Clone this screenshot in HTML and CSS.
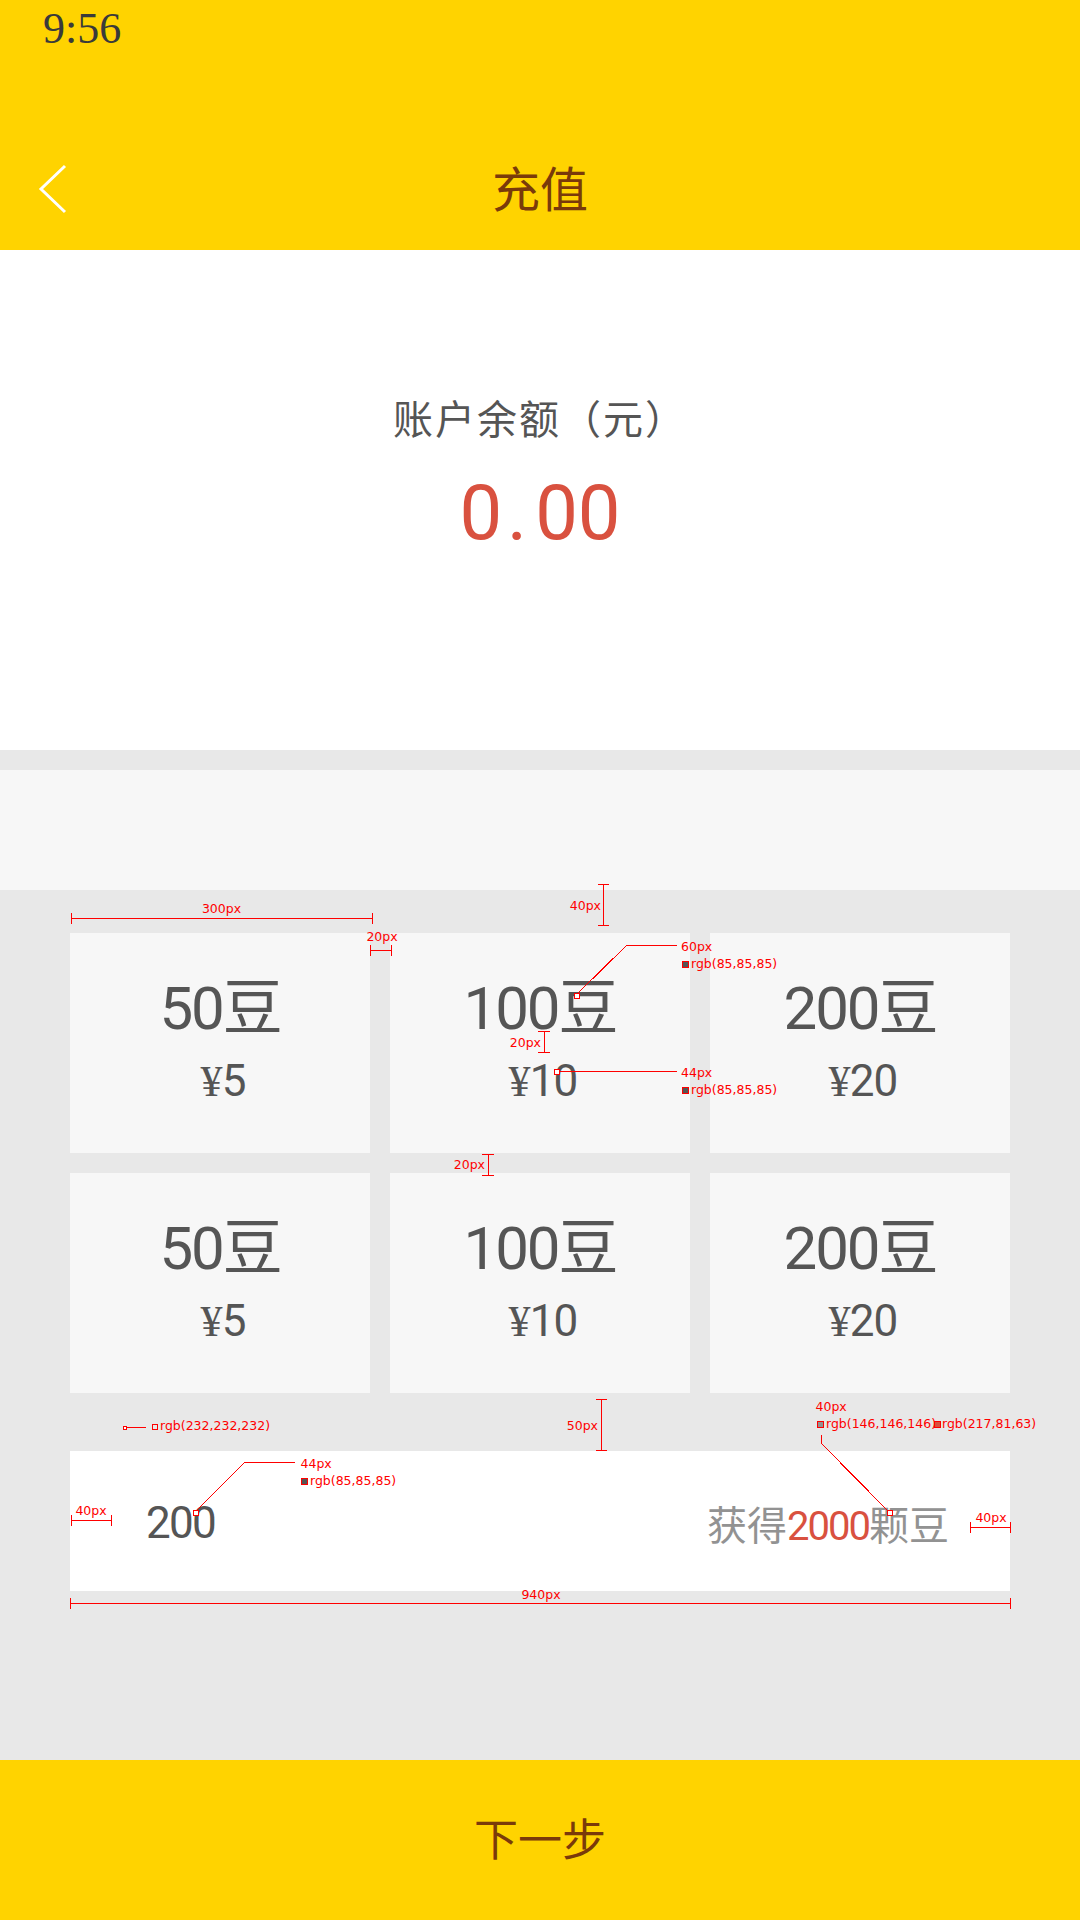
FILE: index.html
```html
<!DOCTYPE html>
<html lang="zh-CN">
<head>
<meta charset="utf-8">
<title>充值</title>
<link rel="stylesheet" href="styles.css">
</head>
<body>
<div class="page">
  <header class="top">
    <div class="status"><span class="time">9:56</span></div>
    <div class="nav">
      <svg class="back" viewBox="0 0 30 50" width="30" height="50"><polyline points="27,2 3,25 27,48"/></svg>
      <h1 class="title">充值</h1>
      <span></span>
    </div>
  </header>

  <section class="balance">
    <p class="balance-label">账户余额（元）</p>
    <p class="balance-amount">0<span class="dot">.</span>00</p>
  </section>

  <div class="banner"></div>

  <div class="packs">
    <div class="pack"><div class="beans">50豆</div><div class="price"><span class="yen">¥</span>5</div></div>
    <div class="pack"><div class="beans">100豆</div><div class="price"><span class="yen">¥</span>10</div></div>
    <div class="pack"><div class="beans">200豆</div><div class="price"><span class="yen">¥</span>20</div></div>
    <div class="pack"><div class="beans">50豆</div><div class="price"><span class="yen">¥</span>5</div></div>
    <div class="pack"><div class="beans">100豆</div><div class="price"><span class="yen">¥</span>10</div></div>
    <div class="pack"><div class="beans">200豆</div><div class="price"><span class="yen">¥</span>20</div></div>
  </div>

  <div class="custom">
    <span class="custom-value">200</span>
    <span class="custom-get">获得<em>2000</em>颗豆</span>
  </div>

  <button class="next" type="button">下一步</button>

  <svg class="marks" width="1080" height="1920" viewBox="0 0 1080 1920">
    <g class="ln">
      <path d="M71 918H372M71 913V924M372 913V924"/>
      <path d="M370 950H391M370 945V956M391 945V956"/>
      <path d="M603 884V925M598 884H609M598 925H609"/>
      <path d="M576 995L627 945H677"/>
      <path d="M556 1071H677"/>
      <path d="M544 1031V1052M538 1031H550M538 1052H550"/>
      <path d="M488 1154V1175M482 1154H494M482 1175H494"/>
      <path d="M127 1427H146"/>
      <path d="M601 1399V1450M596 1399H607M596 1450H607"/>
      <path d="M821 1435V1443L889 1512"/>
      <path d="M195 1512L245 1462H295"/>
      <path d="M71 1520H111M71 1515V1526M111 1515V1526"/>
      <path d="M970 1527H1010M970 1522V1533M1010 1522V1533"/>
      <path d="M70 1603H1010M70 1598V1609M1010 1598V1609"/>
    </g>
    <g class="tx">
      <text x="221.5" y="913" text-anchor="middle">300px</text>
      <text x="382" y="941" text-anchor="middle">20px</text>
      <text x="601" y="910" text-anchor="end">40px</text>
      <text x="681" y="951">60px</text>
      <text x="691" y="968">rgb(85,85,85)</text>
      <text x="681" y="1077">44px</text>
      <text x="691" y="1094">rgb(85,85,85)</text>
      <text x="541" y="1047" text-anchor="end">20px</text>
      <text x="485" y="1169" text-anchor="end">20px</text>
      <text x="160" y="1430">rgb(232,232,232)</text>
      <text x="598" y="1430" text-anchor="end">50px</text>
      <text x="815.5" y="1411">40px</text>
      <text x="826" y="1428">rgb(146,146,146)</text>
      <text x="942" y="1428">rgb(217,81,63)</text>
      <text x="300.5" y="1468">44px</text>
      <text x="310" y="1485">rgb(85,85,85)</text>
      <text x="91" y="1515" text-anchor="middle">40px</text>
      <text x="991" y="1522" text-anchor="middle">40px</text>
      <text x="541" y="1599" text-anchor="middle">940px</text>
    </g>
    <g class="sq">
      <rect x="574" y="993" width="5" height="5" class="hollow"/>
      <rect x="554" y="1069" width="5" height="5" class="hollow"/>
      <rect x="682" y="961" width="6" height="6" class="c55"/>
      <rect x="682" y="1087" width="6" height="6" class="c55"/>
      <rect x="123" y="1426" width="3" height="3" class="hollow"/>
      <rect x="152" y="1424" width="5" height="5" class="ce8"/>
      <rect x="817" y="1421" width="6" height="6" class="c92"/>
      <rect x="934" y="1421" width="6" height="6" class="cd9"/>
      <rect x="887" y="1510" width="5" height="5" class="hollow"/>
      <rect x="193" y="1510" width="5" height="5" class="hollow"/>
      <rect x="301" y="1478" width="6" height="6" class="c55"/>
    </g>
  </svg>
</div>
</body>
</html>
```

FILE: styles.css
```css
* { box-sizing: border-box; }

html, body {
  margin: 0;
  padding: 0;
}

body {
  width: 1080px;
  height: 1920px;
  background: #e8e8e8;
  font-family: Roboto, "Noto Sans CJK SC", sans-serif;
  color: #555;
  overflow: hidden;
}

.page {
  position: relative;
  width: 1080px;
  height: 1920px;
  display: flex;
  flex-direction: column;
}

/* header */
.top {
  flex: none;
  height: 250px;
  background: #ffd300;
}

.status {
  height: 128px;
  padding: 5px 0 0 43px;
}

.time {
  font: 44px/48px "Liberation Serif", serif;
  color: #3a3a3a;
}

.nav {
  height: 122px;
  display: grid;
  grid-template-columns: 1fr auto 1fr;
  align-items: center;
}

.back {
  display: block;
  margin-left: 38px;
}

.back polyline {
  fill: none;
  stroke: #fff;
  stroke-width: 3;
}

.title {
  margin: 0;
  padding-bottom: 6px;
  font: 400 48px/48px "Noto Sans CJK SC", sans-serif;
  color: #7a3a0a;
}

/* balance */
.balance {
  flex: none;
  height: 500px;
  background: #fff;
  display: flex;
  flex-direction: column;
  align-items: center;
  padding-top: 147px;
}

.balance-label {
  margin: 0;
  font: 40px/40px "Noto Sans CJK SC", sans-serif;
  letter-spacing: 2px;
  color: #555;
}

.balance-amount {
  margin: 38px 0 0;
  font: 76px/76px Roboto, sans-serif;
  color: #d9513f;
}

.dot { margin: 0 8px 0 5px; }

.banner {
  flex: none;
  height: 120px;
  margin-top: 20px;
  background: #f7f7f7;
}

/* packs */
.packs {
  width: 940px;
  margin: 43px auto 0;
  display: grid;
  grid-template-columns: repeat(3, 300px);
  grid-auto-rows: 220px;
  gap: 20px;
}

.pack {
  background: #f7f7f7;
  display: flex;
  flex-direction: column;
  align-items: center;
  justify-content: center;
  gap: 20px;
  padding-bottom: 4px;
  color: #555;
}

.beans {
  font-size: 60px;
  line-height: 60px;
  letter-spacing: -0.035em;
}

.price {
  font-size: 44px;
  line-height: 44px;
  letter-spacing: -0.02em;
  padding-left: 6px;
}

.yen { font-family: "Liberation Serif", serif; }

/* custom amount */
.custom {
  flex: none;
  width: 940px;
  height: 140px;
  margin: 58px auto 0;
  background: #fff;
  display: flex;
  align-items: center;
  justify-content: space-between;
  padding: 4px 61px 0 76px;
}

.custom-value {
  font-size: 44px;
  letter-spacing: -0.04em;
  color: #555;
}

.custom-get {
  font-size: 40px;
  color: #929292;
}

.custom-get em {
  font-style: normal;
  color: #d9513f;
  letter-spacing: -0.05em;
}

/* next button */
.next {
  flex: none;
  margin-top: auto;
  width: 100%;
  height: 160px;
  border: 0;
  padding: 0 0 6px;
  background: #ffd300;
  font: 44px "Noto Sans CJK SC", sans-serif;
  color: #7a3a0a;
}

/* design annotations */
.marks {
  position: absolute;
  left: 0;
  top: 0;
  pointer-events: none;
}

.marks .ln path {
  fill: none;
  stroke: #f00;
  stroke-width: 1;
  shape-rendering: crispEdges;
}

.marks .tx text {
  font-family: "DejaVu Sans", sans-serif;
  font-size: 12.5px;
  fill: #f00;
}

.marks .sq rect {
  stroke: #f00;
  stroke-width: 1;
  shape-rendering: crispEdges;
}

.marks .hollow { fill: #fff; }
.marks .c55 { fill: #555; }
.marks .ce8 { fill: #e8e8e8; }
.marks .c92 { fill: #929292; }
.marks .cd9 { fill: #d9513f; }
```
